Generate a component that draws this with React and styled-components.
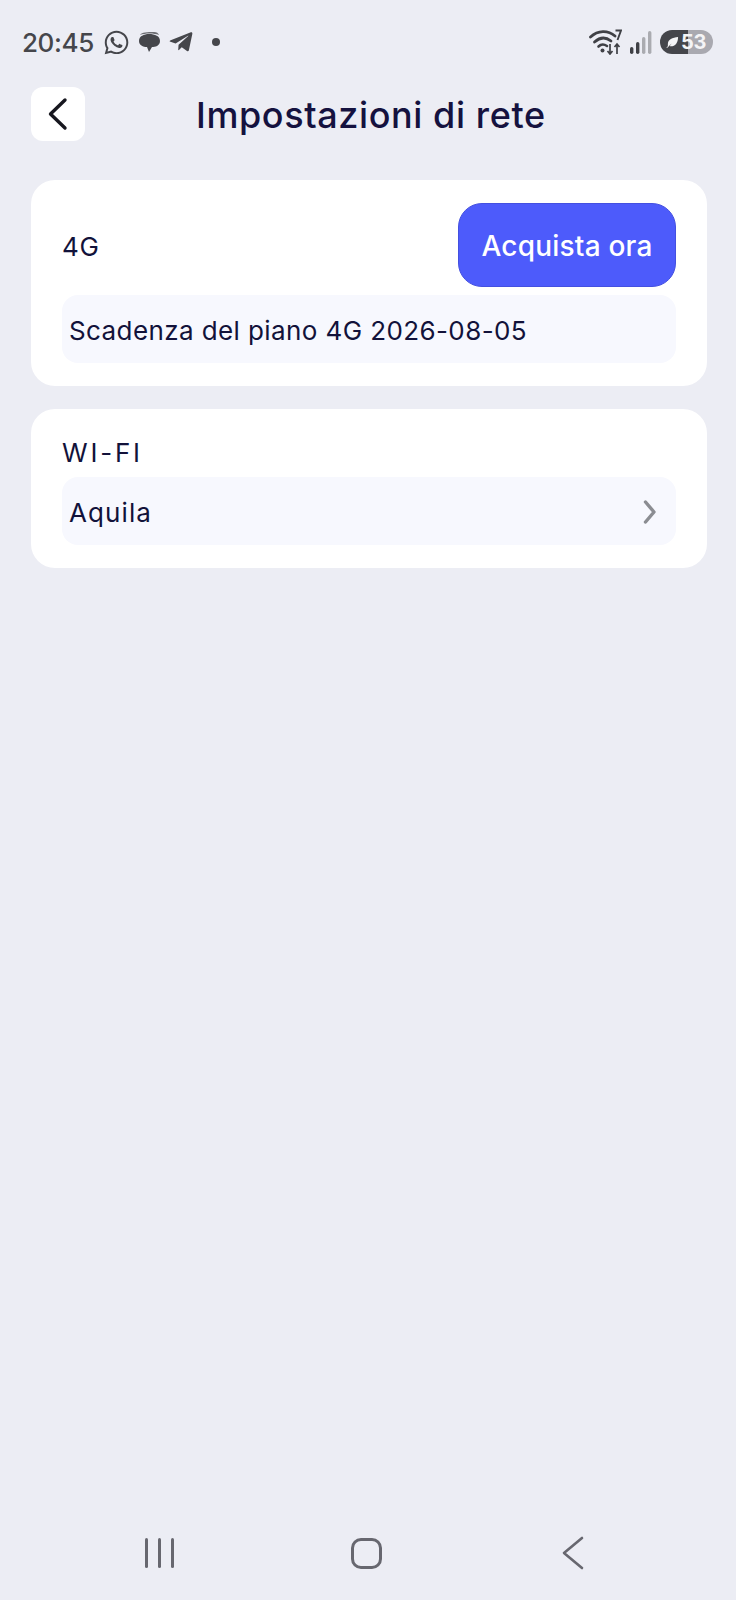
import styled, { createGlobalStyle } from "styled-components";
import { FaWhatsapp, FaTelegramPlane } from "react-icons/fa";

const GlobalStyle = createGlobalStyle`
  html, body {
    margin: 0;
    padding: 0;
    background: #ecedf4;
  }
  * {
    box-sizing: border-box;
  }
`;

const App = () => {
  return (
    <Page>
      <GlobalStyle />
      <StatusBar>
        <StatusLeft>
          <Clock>20:45</Clock>
          <FaWhatsapp size={27} color="#45464b" />
          <ChatIcon />
          <FaTelegramPlane size={26} color="#45464b" />
          <Dot />
        </StatusLeft>
        <StatusRight>
          <WifiIcon />
          <SignalIcon />
          <Battery>
            <LeafIcon />
            <BatteryText>53</BatteryText>
          </Battery>
        </StatusRight>
      </StatusBar>

      <Header>
        <BackButton>
          <svg width="24" height="34" viewBox="0 0 24 34" fill="none">
            <path d="M19 3 L4.5 17 L19 31" stroke="#17171f" strokeWidth="3.4" strokeLinecap="round" strokeLinejoin="round" />
          </svg>
        </BackButton>
        <Title>Impostazioni di rete</Title>
      </Header>

      <Content>
        <Card>
          <CardRow>
            <Label>4G</Label>
            <BuyButton>Acquista ora</BuyButton>
          </CardRow>
          <InnerRow>
            <RowText>Scadenza del piano 4G 2026-08-05</RowText>
          </InnerRow>
        </Card>
        <Card>
          <WifiLabel>WI-FI</WifiLabel>
          <InnerRow>
            <NetworkName>Aquila</NetworkName>
            <svg width="14" height="24" viewBox="0 0 14 24" fill="none">
              <path d="M2.5 2 L11 12 L2.5 22" stroke="#8b8d92" strokeWidth="3.4" strokeLinecap="round" strokeLinejoin="round" />
            </svg>
          </InnerRow>
        </Card>
      </Content>

      <NavBar>
        <NavSlot>
          <RecentLines>
            <RecentLine />
            <RecentLine />
            <RecentLine />
          </RecentLines>
        </NavSlot>
        <NavSlot>
          <HomeSquare />
        </NavSlot>
        <NavSlot>
          <svg width="22" height="34" viewBox="0 0 22 34" fill="none">
            <path d="M20 2 L2 17 L20 32" stroke="#67676f" strokeWidth="2.6" strokeLinecap="round" strokeLinejoin="round" />
          </svg>
        </NavSlot>
      </NavBar>
    </Page>
  );
};

const ChatIcon = () => (
  <svg width="24" height="24" viewBox="0 0 24 24">
    <path d="M3 5 C5 2 10 2 17 2 C20 2 21 3 22 5 C17 3 8 3 3 5 Z" fill="#6b6c71" />
    <path d="M2 11 C2 6 7 4 12 4 C18 4 23 6 23 11 C23 16 18 17 15 17 L12 22 L10 17 C6 17 2 15 2 11 Z" fill="#45464b" />
  </svg>
);

const WifiIcon = () => (
  <svg width="33" height="26" viewBox="0 0 33 26" fill="none">
    <path d="M1.5 8 C9 1 19 1 26 7" stroke="#3f4045" strokeWidth="2.8" strokeLinecap="round" />
    <path d="M5.5 13 C11 8 17 8 22 12" stroke="#3f4045" strokeWidth="2.8" strokeLinecap="round" />
    <path d="M9.5 17.5 C12 15 15 15 18 17" stroke="#3f4045" strokeWidth="2.6" strokeLinecap="round" />
    <circle cx="13.5" cy="21.5" r="2" fill="#3f4045" />
    <path d="M21 15 V25 M18.5 22 L21 25 L23.5 22" stroke="#3f4045" strokeWidth="1.7" />
    <path d="M28 25 V15 M25.5 18 L28 15 L30.5 18" stroke="#3f4045" strokeWidth="1.7" />
    <path d="M26.5 1.5 H32 L28.5 11" stroke="#3f4045" strokeWidth="1.9" />
  </svg>
);

const SignalIcon = () => (
  <svg width="22" height="23" viewBox="0 0 22 23">
    <rect x="0" y="16" width="3.4" height="7" rx="1.7" fill="#3f4045" />
    <rect x="6" y="11" width="3.4" height="12" rx="1.7" fill="#3f4045" />
    <rect x="12" y="6" width="3.4" height="17" rx="1.7" fill="#aaabb0" />
    <rect x="18" y="0" width="3.4" height="23" rx="1.7" fill="#aaabb0" />
  </svg>
);

const LeafIcon = () => (
  <svg width="13" height="13" viewBox="0 0 14 14">
    <path d="M1 13 C3 11 4 10 6 8 C4 11 4 11 4 11 C9 12 13 8 13 1 C7 2 2 3 2 9 C2 10 2 11 2 11 L0.5 12.5 Z" fill="#f4f4f6" />
  </svg>
);

export default App;

const Page = styled.div`
  width: 736px;
  height: 1600px;
  display: flex;
  flex-direction: column;
  background: #ecedf4;
  font-family: "Inter", "Liberation Sans", sans-serif;
  overflow: hidden;
`;

const StatusBar = styled.div`
  height: 87px;
  padding: 29px 23px 0 22px;
  display: flex;
  justify-content: space-between;
  align-items: flex-start;
`;

const StatusLeft = styled.div`
  height: 26px;
  display: flex;
  align-items: center;
  gap: 7px;
`;

const Clock = styled.span`
  font-family: "Inter", sans-serif;
  font-size: 26px;
  font-weight: 500;
  letter-spacing: -0.4px;
  color: #45464b;
  margin-right: 2px;
`;

const Dot = styled.span`
  width: 8px;
  height: 8px;
  margin-left: 11px;
  border-radius: 50%;
  background: #45464b;
`;

const StatusRight = styled.div`
  display: flex;
  align-items: center;
  gap: 8px;
`;

const Battery = styled.div`
  width: 53px;
  height: 24px;
  padding-left: 6px;
  display: flex;
  align-items: center;
  gap: 2px;
  border-radius: 12px;
  background: linear-gradient(to right, #45464b 0 28px, #a9a9b0 28px);
`;

const BatteryText = styled.span`
  font-size: 20px;
  font-weight: 700;
  letter-spacing: -0.3px;
  color: #f4f4f6;
`;

const Header = styled.div`
  padding: 0 31px;
  display: flex;
  align-items: center;
`;

const BackButton = styled.div`
  width: 54px;
  height: 54px;
  flex-shrink: 0;
  display: flex;
  justify-content: center;
  align-items: center;
  border-radius: 12px;
  background: #ffffff;
`;

const Title = styled.h1`
  margin: 2px 0 0 111px;
  font-size: 36px;
  font-weight: 500;
  letter-spacing: 0.6px;
  color: #15123f;
  white-space: nowrap;
`;

const Content = styled.div`
  margin-top: 39px;
  padding: 0 29px 0 31px;
  display: flex;
  flex-direction: column;
  gap: 23px;
`;

const Card = styled.div`
  padding: 23px 31px;
  display: flex;
  flex-direction: column;
  gap: 8px;
  border-radius: 24px;
  background: #ffffff;
`;

const CardRow = styled.div`
  display: flex;
  justify-content: space-between;
  align-items: center;
`;

const Label = styled.span`
  padding-top: 2px;
  font-size: 26px;
  font-weight: 400;
  letter-spacing: 0.6px;
  color: #12123a;
`;

const WifiLabel = styled(Label)`
  height: 37px;
  padding-top: 0;
  line-height: 42px;
  letter-spacing: 2.8px;
`;

const BuyButton = styled.button`
  width: 218px;
  height: 84px;
  padding: 2px 0 0;
  border: 1px solid #4450e0;
  border-radius: 24px;
  background: #4d5bfb;
  font-family: inherit;
  font-size: 28px;
  font-weight: 500;
  letter-spacing: 0.2px;
  color: #ffffff;
`;

const InnerRow = styled.div`
  height: 68px;
  padding: 2px 19px 0 7px;
  display: flex;
  justify-content: space-between;
  align-items: center;
  border-radius: 16px;
  background: #f7f8fe;
  font-size: 26px;
  color: #12123a;
`;

const RowText = styled.span`
  letter-spacing: 0.4px;
`;

const NetworkName = styled.span`
  letter-spacing: 1.1px;
`;

const NavBar = styled.div`
  margin-top: auto;
  padding: 0 4px 31px 0;
  display: grid;
  grid-template-columns: repeat(3, 207px);
  justify-content: center;
`;

const NavSlot = styled.div`
  height: 32px;
  display: flex;
  justify-content: center;
  align-items: center;
`;

const RecentLines = styled.div`
  display: flex;
  gap: 10px;
`;

const RecentLine = styled.span`
  width: 3px;
  height: 30px;
  border-radius: 2px;
  background: #67676f;
`;

const HomeSquare = styled.div`
  width: 31px;
  height: 31px;
  border: 3px solid #67676f;
  border-radius: 10px;
`;
